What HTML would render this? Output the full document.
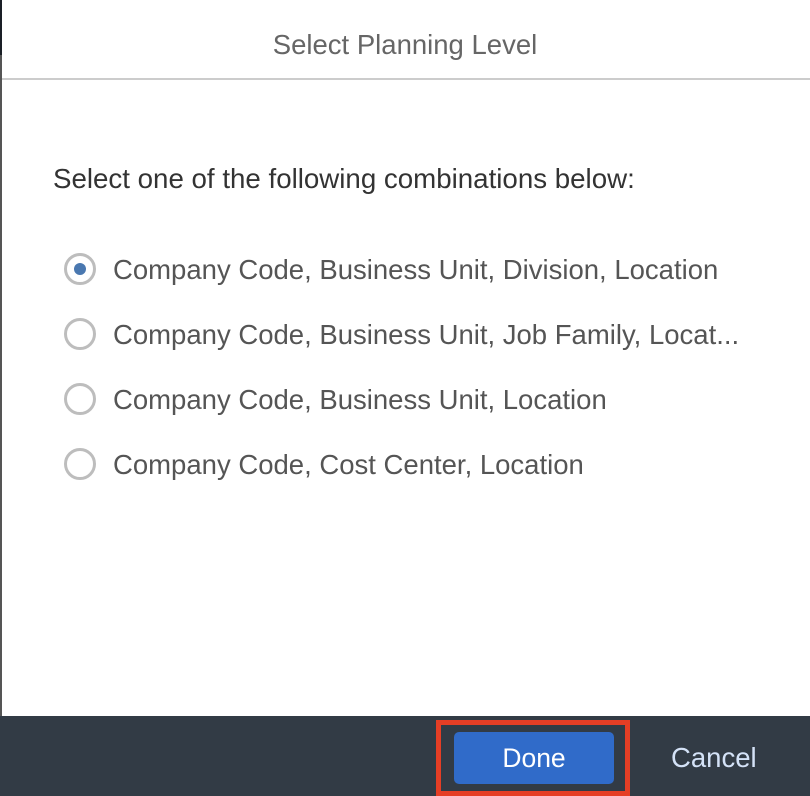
<!DOCTYPE html>
<html><head><style>
body{margin:0;width:810px;height:796px;background:#fff;font-family:"Liberation Sans",sans-serif;position:relative;overflow:hidden}
.edge{position:absolute;left:0;top:0;width:2px;height:716px;background:#555}
.edge2{position:absolute;left:0;top:0;width:2px;height:55px;background:#1a1f26}
.title{position:absolute;top:29px;left:0;width:810px;text-align:center;font-size:27.5px;color:#666}
.hr{position:absolute;top:78px;left:2px;right:0;height:2px;background:#ccc}
.lead{position:absolute;top:163px;left:53px;font-size:27.7px;color:#333}
.opt{position:absolute;left:64px;height:32px;line-height:32px;font-size:27.5px;color:#555}
.opt .r{position:absolute;left:0;top:-1px;width:26px;height:26px;border:3px solid #bdbdbd;border-radius:50%;background:#fff}
.opt .r.c::after{content:"";position:absolute;left:7px;top:7px;width:12px;height:12px;border-radius:50%;background:#4a78b0}
.opt span{position:absolute;left:49px;white-space:nowrap}
.foot{position:absolute;top:716px;left:0;width:810px;height:80px;background:#323b45}
.red{position:absolute;left:436px;top:720px;width:184px;height:66px;border:5px solid #e53e25}
.done{position:absolute;left:454px;top:732px;width:160px;height:52px;background:#306bc9;border-radius:5px;color:#fff;font-size:26.5px;text-align:center;line-height:52px}
.cancel{position:absolute;left:671px;top:732px;line-height:52px;font-size:27.5px;color:#d4e2f7}
</style></head><body>
<div class="edge"></div><div class="edge2"></div>
<div class="title">Select Planning Level</div>
<div class="hr"></div>
<div class="lead">Select one of the following combinations below:</div>
<div class="opt" style="top:254px"><div class="r c"></div><span>Company Code, Business Unit, Division, Location</span></div>
<div class="opt" style="top:319px"><div class="r"></div><span>Company Code, Business Unit, Job Family, Locat...</span></div>
<div class="opt" style="top:384px"><div class="r"></div><span>Company Code, Business Unit, Location</span></div>
<div class="opt" style="top:449px"><div class="r"></div><span>Company Code, Cost Center, Location</span></div>
<div class="foot"></div>
<div class="red"></div>
<div class="done">Done</div>
<div class="cancel">Cancel</div>
</body></html>
